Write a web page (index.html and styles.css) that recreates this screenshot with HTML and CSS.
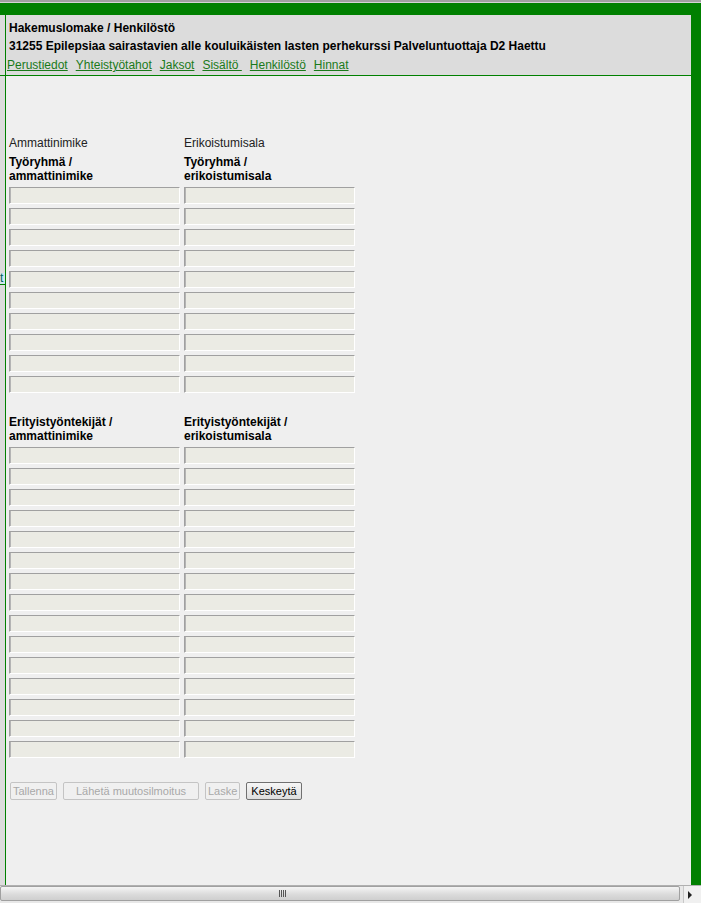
FILE: index.html
```html
<!DOCTYPE html>
<html lang="fi">
<head>
    <meta charset="UTF-8">
    <title>Hakemuslomake / Henkilöstö</title>
    <link rel="stylesheet" href="styles.css">
</head>
<body>
    <div class="topline"></div>
    <div class="greenbar"></div>

    <div class="frames">
        <!-- vasen kehys, lähes piilossa -->
        <div class="side">
            <div class="side-head"></div>
            <a class="side-link" href="#">t</a>
        </div>

        <div class="main">
            <div class="header">
                <div class="title">Hakemuslomake / Henkilöstö</div>
                <div class="title title-2">31255 Epilepsiaa sairastavien alle kouluikäisten lasten perhekurssi Palveluntuottaja D2 Haettu</div>
                <div class="tabs">
                    <a href="#">Perustiedot</a>
                    <a href="#">Yhteistyötahot</a>
                    <a href="#">Jaksot</a>
                    <a href="#">Sisältö&nbsp;</a>
                    <a href="#">Henkilöstö</a>
                    <a href="#">Hinnat</a>
                </div>
            </div>

            <div class="content">
                <div class="grid">
                    <div class="plain">Ammattinimike</div>
                    <div class="plain">Erikoistumisala</div>
                    <div class="head">Työryhmä /<br>ammattinimike</div>
                    <div class="head">Työryhmä /<br>erikoistumisala</div>

                    <input class="field" type="text" readonly><input class="field" type="text" readonly>
                    <input class="field" type="text" readonly><input class="field" type="text" readonly>
                    <input class="field" type="text" readonly><input class="field" type="text" readonly>
                    <input class="field" type="text" readonly><input class="field" type="text" readonly>
                    <input class="field" type="text" readonly><input class="field" type="text" readonly>
                    <input class="field" type="text" readonly><input class="field" type="text" readonly>
                    <input class="field" type="text" readonly><input class="field" type="text" readonly>
                    <input class="field" type="text" readonly><input class="field" type="text" readonly>
                    <input class="field" type="text" readonly><input class="field" type="text" readonly>
                    <input class="field" type="text" readonly><input class="field" type="text" readonly>
                </div>

                <div class="grid grid-2">
                    <div class="head">Erityistyöntekijät /<br>ammattinimike</div>
                    <div class="head">Erityistyöntekijät /<br>erikoistumisala</div>

                    <input class="field" type="text" readonly><input class="field" type="text" readonly>
                    <input class="field" type="text" readonly><input class="field" type="text" readonly>
                    <input class="field" type="text" readonly><input class="field" type="text" readonly>
                    <input class="field" type="text" readonly><input class="field" type="text" readonly>
                    <input class="field" type="text" readonly><input class="field" type="text" readonly>
                    <input class="field" type="text" readonly><input class="field" type="text" readonly>
                    <input class="field" type="text" readonly><input class="field" type="text" readonly>
                    <input class="field" type="text" readonly><input class="field" type="text" readonly>
                    <input class="field" type="text" readonly><input class="field" type="text" readonly>
                    <input class="field" type="text" readonly><input class="field" type="text" readonly>
                    <input class="field" type="text" readonly><input class="field" type="text" readonly>
                    <input class="field" type="text" readonly><input class="field" type="text" readonly>
                    <input class="field" type="text" readonly><input class="field" type="text" readonly>
                    <input class="field" type="text" readonly><input class="field" type="text" readonly>
                    <input class="field" type="text" readonly><input class="field" type="text" readonly>
                </div>

                <div class="buttons">
                    <button class="btn" type="button" disabled>Tallenna</button>
                    <button class="btn btn-wide" type="button" disabled>Lähetä muutosilmoitus</button>
                    <button class="btn" type="button" disabled>Laske</button>
                    <button class="btn" type="button">Keskeytä</button>
                </div>
            </div>
        </div>

        <div class="rightbar"></div>
    </div>

    <!-- vaakavierityspalkki -->
    <div class="hscroll">
        <div class="thumb"><span class="grip"></span></div>
        <div class="arrow"><span class="tri"></span></div>
    </div>
</body>
</html>
```

FILE: styles.css
```css
/* perusasetukset */
body {
    margin: 0;
    padding: 0;
    width: 701px;
    height: 903px;
    overflow: hidden;
    background: #dcdcdc;
    font-family: "Liberation Sans", Arial, sans-serif;
    font-size: 12px;
    color: #000;
}

.topline {
    height: 2px;
    background: #a0a0a0;
    border-bottom: 1px solid #d4d4d4;
}

.greenbar {
    height: 12px;
    background: #008000;
}

/* kehykset */
.frames {
    display: flex;
    height: 870px;
}

.side {
    width: 5px;
    background: #dcdcdc;
}

.side-head {
    height: 60px;
    border-bottom: 1px solid #008000;
}

.side-link {
    display: block;
    width: 5px;
    margin-top: 197px;
    line-height: 11px;
    font-size: 12px;
    color: #006060;
    background: #cfe6ee;
    text-decoration: none;
    border-bottom: 1px solid #008000;
}

.main {
    flex: 1;
    border-left: 1px solid #008000;
    background: #efefef;
    display: flex;
    flex-direction: column;
}

.rightbar {
    width: 10px;
    background: #008000;
}

/* otsikko ja välilehdet */
.header {
    height: 56px;
    padding: 4px 0 0 1px;
    background: #dcdcdc;
    border-bottom: 1px solid #008000;
}

.title {
    padding-left: 2px;
    font-weight: bold;
    line-height: 18px;
}

.title-2 {
    line-height: 19px;
}

.tabs {
    display: flex;
    gap: 8px;
    line-height: 18px;
}

.tabs a {
    color: #1a7a1a;
    text-decoration: underline;
}

/* lomake */
.content {
    padding: 60px 0 0 3px;
}

.grid {
    display: grid;
    grid-template-columns: 171px 171px;
    column-gap: 4px;
    row-gap: 4px;
    width: 346px;
}

.grid-2 {
    margin-top: 22px;
}

.plain {
    line-height: 14px;
    color: #222;
    margin-bottom: 1px;
}

.head {
    font-weight: bold;
    line-height: 14px;
}

.field {
    display: block;
    box-sizing: border-box;
    width: 171px;
    height: 17px;
    margin: 0;
    padding: 0;
    background: #ebebe4;
    border: 1px solid;
    border-color: #a0a0a0 #ffffff #ffffff #a0a0a0;
    box-shadow: inset 1px 0 0 #b4b4b4;
    outline: none;
}

/* painikkeet */
.buttons {
    display: flex;
    gap: 6px;
    margin: 24px 0 0 1px;
}

.btn {
    height: 18px;
    padding: 0 4px;
    font-family: "Liberation Sans", Arial, sans-serif;
    font-size: 11px;
    line-height: 14px;
    color: #000;
    background: linear-gradient(#f6f6f6, #dedede);
    border: 1px solid #707070;
    border-radius: 2px;
}

.btn:disabled {
    padding: 0 2px;
    color: #a8a8a8;
    background: #f0f0f0;
    border-color: #c4c4c4;
}

.btn-wide {
    width: 136px;
}

/* vierityspalkki */
.hscroll {
    display: flex;
    height: 18px;
    box-sizing: border-box;
    border-top: 1px solid #b0b0b0;
    background: #e8e8e8;
}

.thumb {
    width: 680px;
    height: 15px;
    box-sizing: border-box;
    border: 1px solid #a0a0a0;
    border-radius: 2px;
    background: linear-gradient(#f4f4f4, #dadada 60%, #cfcfcf);
    display: flex;
    align-items: center;
    padding-left: 278px;
}

.grip {
    width: 7px;
    height: 7px;
    background: repeating-linear-gradient(90deg, #555 0, #555 1px, transparent 1px, transparent 2px);
}

.arrow {
    width: 18px;
    margin-left: 3px;
    display: flex;
    align-items: center;
    padding-left: 4px;
    box-sizing: border-box;
    border-left: 1px solid #c8c8c8;
    background: #f0f0f0;
}

.tri {
    width: 0;
    height: 0;
    border-top: 4px solid transparent;
    border-bottom: 4px solid transparent;
    border-left: 4px solid #222;
}
```
